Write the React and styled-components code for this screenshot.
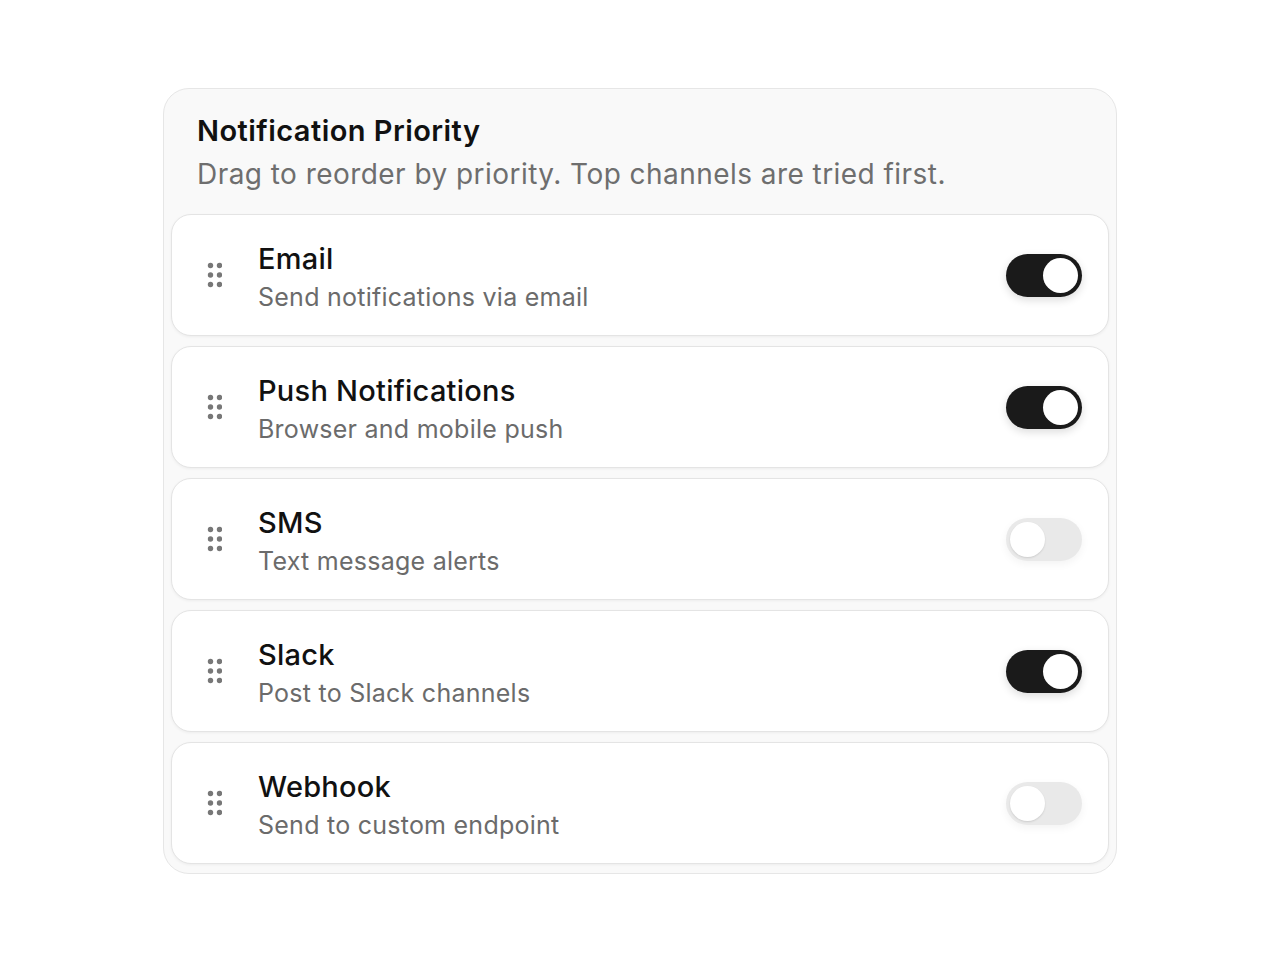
import React from "react";
import styled, { createGlobalStyle } from "styled-components";

const Global = createGlobalStyle`
  html, body { margin: 0; padding: 0; background: #ffffff; }
  body { font-family: Inter, "Noto Sans", "Liberation Sans", sans-serif; -webkit-font-smoothing: antialiased; }
`;

const Page = styled.div`
  display: flex;
  justify-content: center;
  padding-top: 88px;
`;

const Card = styled.section`
  width: 954px;
  box-sizing: border-box;
  background: #f9f9f9;
  border: 1.5px solid #e6e6e6;
  border-radius: 26px;
  padding: 0 7px 9px;
`;

const Header = styled.header`
  padding: 24px 26px 23px;
`;

const Title = styled.h2`
  margin: 0;
  font-size: 29px;
  line-height: 36px;
  font-weight: 600;
  color: #111111;
  letter-spacing: 0.45px;
`;

const Subtitle = styled.p`
  margin: 8px 0 0;
  font-size: 28px;
  line-height: 34px;
  font-weight: 400;
  color: #6e6e6e;
  letter-spacing: 0.45px;
`;

const List = styled.ul`
  list-style: none;
  margin: 0;
  padding: 0;
  display: flex;
  flex-direction: column;
  gap: 10px;
`;

const Row = styled.li`
  height: 122px;
  box-sizing: border-box;
  display: flex;
  align-items: center;
  gap: 32px;
  padding: 0 26px 0 30px;
  background: #ffffff;
  border: 1.5px solid #e4e4e4;
  border-radius: 20px;
  box-shadow: 0 1px 3px rgba(0, 0, 0, 0.05);
`;

const Handle = styled.div`
  width: 24px;
  display: flex;
  justify-content: center;
  cursor: grab;
  color: #777777;
`;

const Text = styled.div`
  flex: 1;
  display: flex;
  flex-direction: column;
  gap: 6px;
  padding-top: 3px;
`;

const Name = styled.div`
  font-size: 29px;
  line-height: 34px;
  font-weight: 500;
  color: #111111;
  letter-spacing: 0.25px;
`;

const Desc = styled.div`
  font-size: 25px;
  line-height: 30px;
  color: #6b6b6b;
  letter-spacing: 0.25px;
`;

const Track = styled.button`
  width: 76px;
  height: 43px;
  border: none;
  padding: 4px;
  border-radius: 22px;
  display: flex;
  justify-content: ${(p) => (p.$on ? "flex-end" : "flex-start")};
  align-items: center;
  background: ${(p) => (p.$on ? "#1a1a1a" : "#e9e9e9")};
  box-shadow: ${(p) =>
    p.$on ? "0 3px 9px rgba(0,0,0,0.14)" : "0 3px 8px rgba(0,0,0,0.05)"};
  cursor: pointer;
`;

const Knob = styled.span`
  width: 35px;
  height: 35px;
  border-radius: 50%;
  background: #ffffff;
  box-shadow: ${(p) => (p.$on ? "none" : "0 1px 2px rgba(0,0,0,0.12)")};
`;

const GripIcon = () => (
  <svg width="16" height="28" viewBox="0 0 16 28" fill="currentColor">
    {[4.5, 13.5].map((x) =>
      [4.5, 14, 23.5].map((y) => <circle key={`${x}-${y}`} cx={x} cy={y} r="2.7" />)
    )}
  </svg>
);

const channels = [
  { name: "Email", desc: "Send notifications via email", on: true },
  { name: "Push Notifications", desc: "Browser and mobile push", on: true },
  { name: "SMS", desc: "Text message alerts", on: false },
  { name: "Slack", desc: "Post to Slack channels", on: true },
  { name: "Webhook", desc: "Send to custom endpoint", on: false },
];

export default function App() {
  return (
    <>
      <Global />
      <Page>
        <Card>
          <Header>
            <Title>Notification Priority</Title>
            <Subtitle>Drag to reorder by priority. Top channels are tried first.</Subtitle>
          </Header>
          <List>
            {channels.map((c) => (
              <Row key={c.name}>
                <Handle>
                  <GripIcon />
                </Handle>
                <Text>
                  <Name>{c.name}</Name>
                  <Desc>{c.desc}</Desc>
                </Text>
                <Track $on={c.on} aria-pressed={c.on}>
                  <Knob $on={c.on} />
                </Track>
              </Row>
            ))}
          </List>
        </Card>
      </Page>
    </>
  );
}
